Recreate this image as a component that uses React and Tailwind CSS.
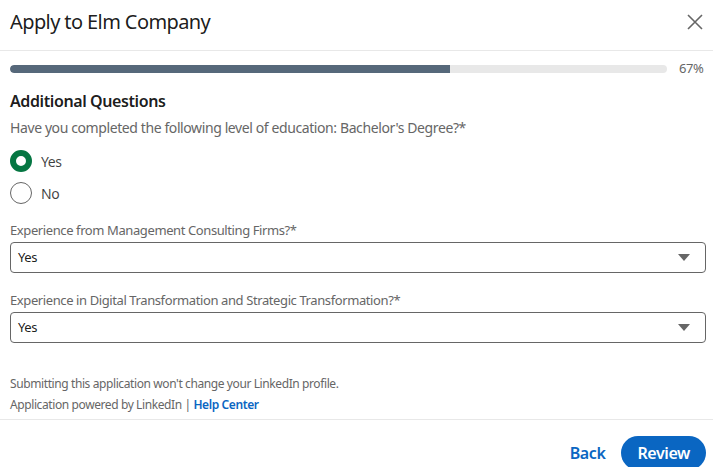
export default function App() {
  return (
    <div className="w-[713px] h-[467px] bg-white overflow-hidden text-[#000000e6] tracking-[-0.025em]" style={{ fontFamily: '"Noto Sans", "Open Sans", sans-serif' }}>
      {/* header */}
      <div className="h-[51px] flex items-center justify-between pl-[10px] pr-[8px] border-b border-[#e8e8e8]">
        <h2 className="text-[20px] text-[#000000e6] leading-none -mt-[6px] tracking-[-0.03em]">Apply to Elm Company</h2>
        <button className="w-[20px] h-[20px] flex items-center justify-center text-[#666] -mt-[6px]">
          <svg width="16" height="16" viewBox="0 0 16 16" fill="none" stroke="currentColor" strokeWidth="1.6">
            <path d="M1 1 L15 15 M15 1 L1 15" />
          </svg>
        </button>
      </div>

      <div className="pl-[10px] pr-[7px]">
        {/* progress */}
        <div className="flex items-center mt-[14px] h-[8px]">
          <div className="w-[657px] h-[8px] rounded-full bg-[#e8e8e8] overflow-hidden">
            <div className="h-full w-[67%] bg-[#56687a] rounded-l-full" />
          </div>
          <span className="ml-[12px] text-[13px] text-[#666]">67%</span>
        </div>

        <h3 className="mt-[18px] text-[16px] font-semibold leading-[20px]">Additional Questions</h3>
        <p className="mt-[8px] text-[14px] text-[#666] leading-[18px]">
          Have you completed the following level of education: Bachelor's Degree?*
        </p>

        {/* radios */}
        <div className="mt-[13px] flex flex-col gap-[10px]">
          <label className="flex items-center gap-[9px] h-[22px]">
            <span className="w-[22px] h-[22px] rounded-full border-[6px] border-[#057642] bg-white box-border" />
            <span className="text-[14px] text-[#000000bf]">Yes</span>
          </label>
          <label className="flex items-center gap-[9px] h-[22px]">
            <span className="w-[22px] h-[22px] rounded-full border border-[#666] bg-white box-border" />
            <span className="text-[14px] text-[#000000bf]">No</span>
          </label>
        </div>

        {/* selects */}
        <div className="mt-[18px]">
          <p className="text-[13px] text-[#666] leading-[16px]">Experience from Management Consulting Firms?*</p>
          <div className="mt-[4px] h-[31px] border border-[#666] rounded-[4px] flex items-center justify-between pl-[7px] pr-[15px]">
            <span className="text-[13px] text-[#000000e6]">Yes</span>
            <svg width="12" height="8" viewBox="0 0 12 8"><path d="M0 0 H12 L6 7 Z" fill="#666" /></svg>
          </div>
        </div>
        <div className="mt-[19px]">
          <p className="text-[13px] text-[#666] leading-[16px]">Experience in Digital Transformation and Strategic Transformation?*</p>
          <div className="mt-[4px] h-[31px] border border-[#666] rounded-[4px] flex items-center justify-between pl-[7px] pr-[15px]">
            <span className="text-[13px] text-[#000000e6]">Yes</span>
            <svg width="12" height="8" viewBox="0 0 12 8"><path d="M0 0 H12 L6 7 Z" fill="#666" /></svg>
          </div>
        </div>

        {/* footer text */}
        <div className="mt-[30px] text-[12px] text-[#666] leading-[21px]">
          <p>Submitting this application won't change your LinkedIn profile.</p>
          <p>
            Application powered by LinkedIn | <a className="text-[#0a66c2] font-semibold">Help Center</a>
          </p>
        </div>
      </div>

      <div className="mt-[4px] border-t border-[#e8e8e8] flex justify-end items-center gap-[16px] pr-[7px] pt-[16px]">
        <button className="text-[16px] font-semibold text-[#0a66c2]">Back</button>
        <button className="h-[34px] px-[16px] rounded-full bg-[#0a66c2] text-white text-[16px] font-semibold">Review</button>
      </div>
    </div>
  );
}
